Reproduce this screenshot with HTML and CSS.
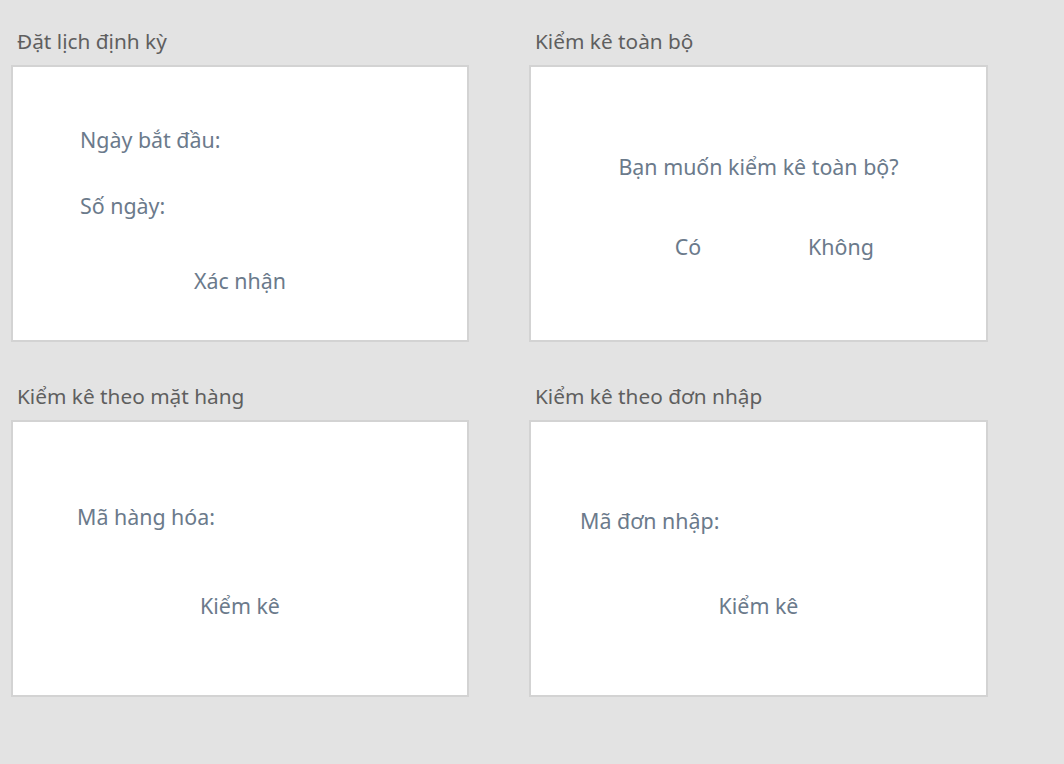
FILE: index.html
```html
<!DOCTYPE html>
<html lang="vi">
<head>
<meta charset="utf-8">
<title>Kiểm kê</title>
<link rel="stylesheet" href="styles.css">
</head>
<body>
<main class="grid">
  <section class="panel">
    <h2 class="panel-title">Đặt lịch định kỳ</h2>
    <div class="card card-schedule">
      <div class="label">Ngày bắt đầu:</div>
      <div class="label label-second">Số ngày:</div>
      <div class="action action-schedule">Xác nhận</div>
    </div>
  </section>
  <section class="panel">
    <h2 class="panel-title">Kiểm kê toàn bộ</h2>
    <div class="card card-all">
      <div class="question">Bạn muốn kiểm kê toàn bộ?</div>
      <div class="choices">
        <span class="choice">Có</span>
        <span class="choice">Không</span>
      </div>
    </div>
  </section>
  <section class="panel">
    <h2 class="panel-title">Kiểm kê theo mặt hàng</h2>
    <div class="card card-item">
      <div class="label">Mã hàng hóa:</div>
      <div class="action action-item">Kiểm kê</div>
    </div>
  </section>
  <section class="panel">
    <h2 class="panel-title">Kiểm kê theo đơn nhập</h2>
    <div class="card card-order">
      <div class="label">Mã đơn nhập:</div>
      <div class="action action-order">Kiểm kê</div>
    </div>
  </section>
</main>
</body>
</html>
```
FILE: styles.css
```css
html, body {
  margin: 0;
  padding: 0;
  background: #e3e3e3;
}
body {
  font-family: "Noto Sans", "Open Sans", sans-serif;
  font-size: 21.4px;
  line-height: 28px;
  width: 1064px;
  height: 764px;
  overflow: hidden;
}
.grid {
  display: grid;
  grid-template-columns: 458px 459px;
  column-gap: 60px;
  row-gap: 40px;
  padding: 27px 0 0 11px;
}
.panel-title {
  margin: 0 0 10px 0;
  padding-left: 6px;
  font-size: 20.8px;
  font-weight: normal;
  line-height: 28px;
  color: #5f5f5f;
}
.card {
  box-sizing: border-box;
  height: 277px;
  background: #ffffff;
  border: 2px solid #d3d3d3;
  color: #6b7a8b;
}
.label, .action, .question, .choice {
  line-height: 28px;
}
.card-schedule {
  padding: 59px 0 0 67px;
}
.label-second {
  margin-top: 38px;
}
.action {
  text-align: center;
}
.action-schedule {
  margin-top: 47px;
  margin-left: -67px;
}
.card-all {
  padding-top: 86px;
}
.question {
  text-align: center;
}
.choices {
  display: flex;
  justify-content: center;
  gap: 53px;
  margin-top: 52px;
  padding-left: 12px;
}
.choice {
  width: 100px;
  text-align: center;
}
.card-item {
  padding: 81px 0 0 64px;
}
.action-item {
  margin-top: 61px;
  margin-left: -64px;
}
.card-order {
  padding: 85px 0 0 49px;
}
.action-order {
  margin-top: 57px;
  margin-left: -49px;
}
```
